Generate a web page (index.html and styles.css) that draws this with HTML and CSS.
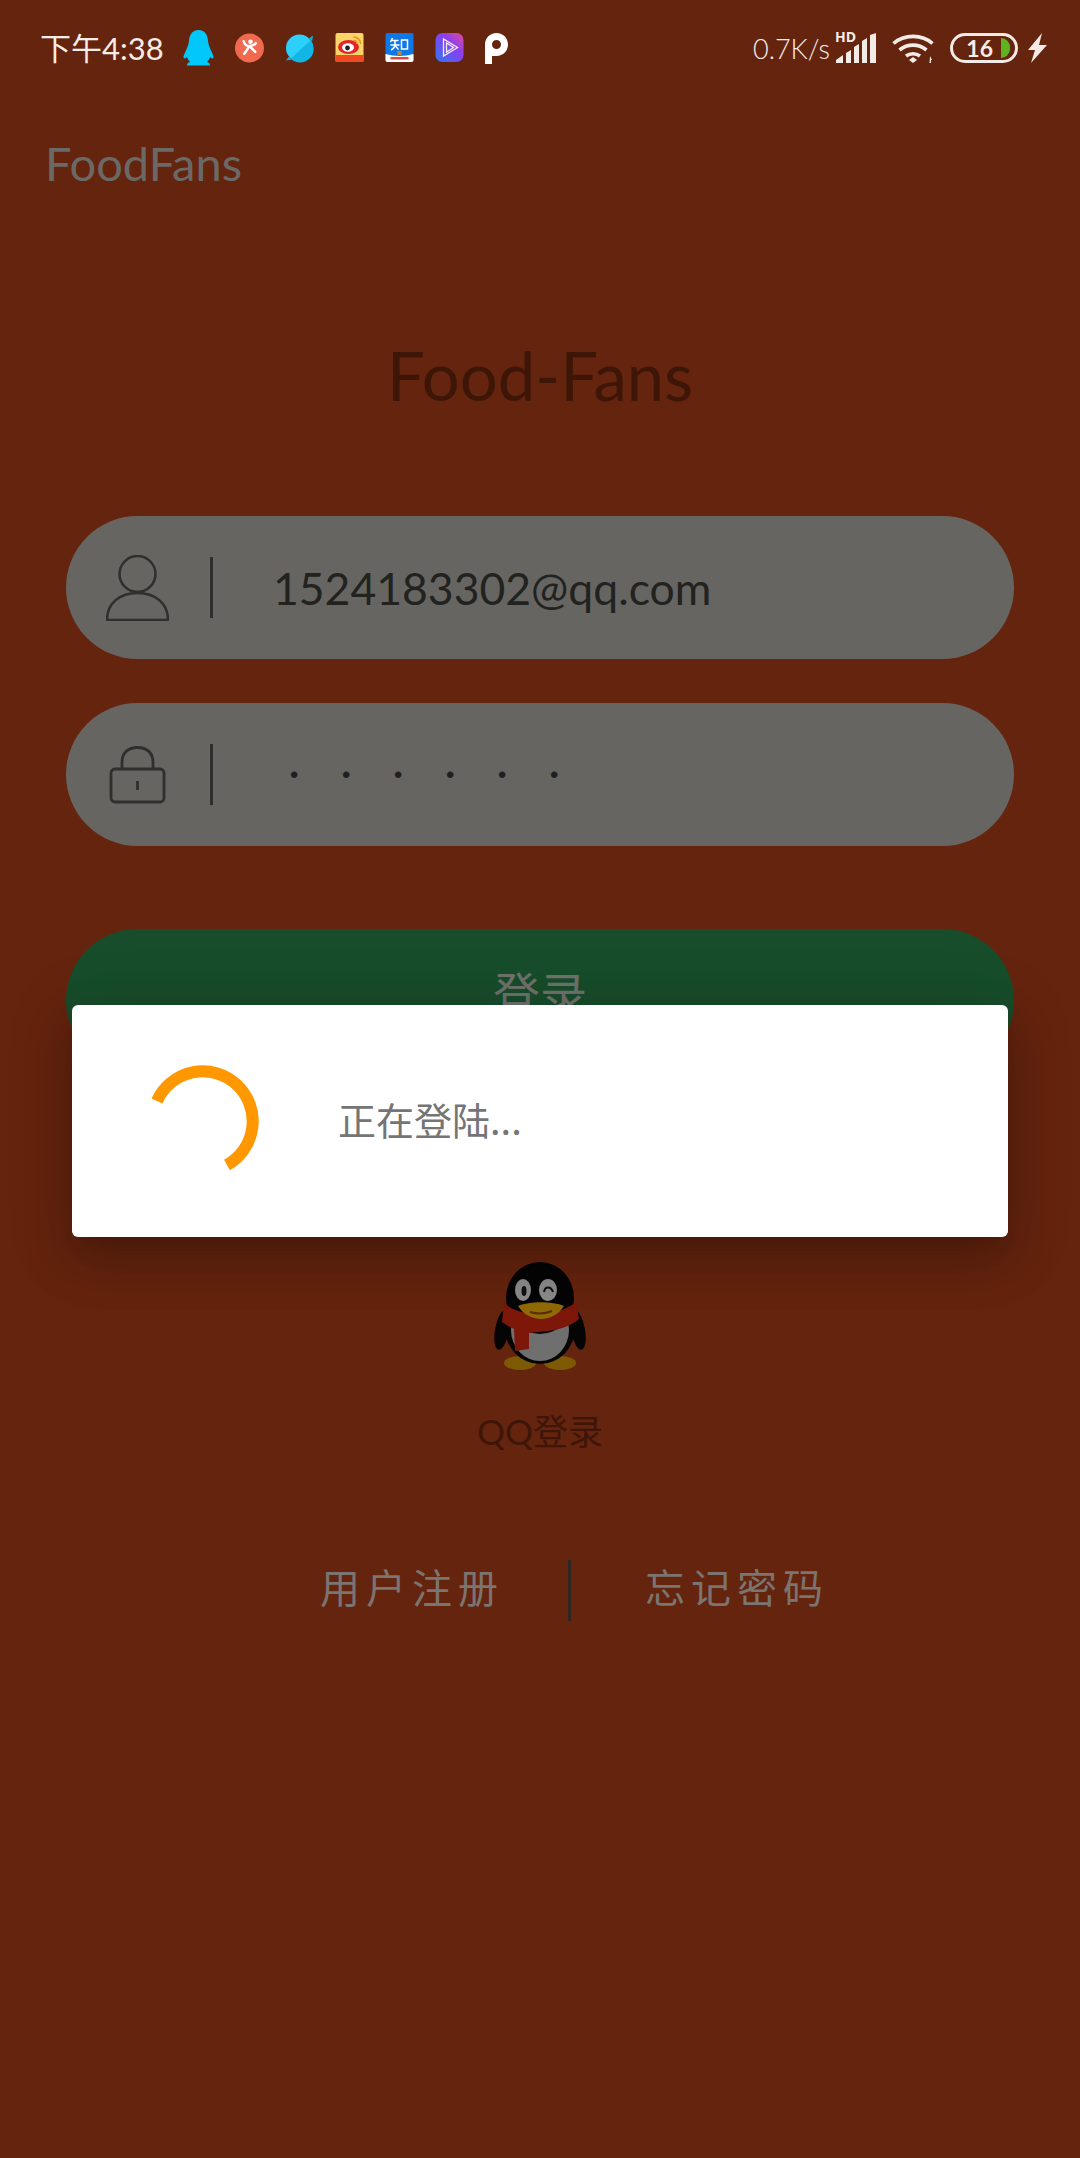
FILE: index.html
```html
<!DOCTYPE html>
<html lang="zh">
<head>
<meta charset="utf-8">
<title>FoodFans</title>
<link rel="stylesheet" href="styles.css">
</head>
<body>
<div class="page">
  <header class="status">
    <span class="time">下午4:38</span>
    <div class="notif">
      <svg class="n-qq" viewBox="0 0 31 36"><path fill="#00c8fa" d="M15.5 0C9 0 6.2 5.500 6 11 5.800 15 3 20 1 25c-1 2.500-.5 4 1 3.500l2-1.500c.5 2 1.500 3.500 3 5-2 .5-3 1.500-3 3.500h23c0-2-1-3-3-3.500 1.500-1.500 2.500-3 3-5l2 1.500c1.500.5 2-1 1-3.500-2-5-4.800-10-5-14C25 5.500 22 0 15.500 0z"/></svg>
      <svg class="n-sq" viewBox="0 0 30 30"><circle cx="15" cy="15" r="15" fill="#ef6a4f"/><circle cx="16" cy="8.500" r="2.400" fill="#fff"/><path fill="none" stroke="#fff" stroke-width="2.600" stroke-linecap="round" d="M9 8c1 4 3 5 6 5s5-1 6.500-3M14.500 13c-1 3-3 5-5 8M15 13c2 2 4 4 6 6"/></svg>
      <svg class="n-sq" viewBox="0 0 30 30"><circle cx="15" cy="15" r="14" fill="#2cd0fb"/><path fill="#12b6e4" d="M26.500 7A14 14 0 0 1 6 26z"/><path fill="#12b6e4" d="M25 5l4-3-1 6zM4 24l-3 4 6-1z"/></svg>
      <svg class="n-sq" viewBox="0 0 28 30"><rect width="28" height="29" rx="2" fill="#fbd568"/><rect y="22" width="28" height="7" fill="#ee4a22"/><ellipse cx="13" cy="14" rx="10.500" ry="7" fill="#e1252c"/><ellipse cx="12.500" cy="14.500" rx="6" ry="4.200" fill="#fff"/><circle cx="12" cy="15" r="2.400" fill="#222"/><path fill="none" stroke="#e98f1d" stroke-width="1.600" d="M18 4c4 0 7 3 7 7M18 7.500c2 0 3.500 1.500 3.500 3.500"/></svg>
      <svg class="n-sq" viewBox="0 0 28 30"><rect width="28" height="29" rx="2" fill="#0f78e6"/><path fill="#fff" d="M0 21q14 4 28 0v6a2 2 0 0 1-2 2H2a2 2 0 0 1-2-2z"/><path fill="none" stroke="#fff" stroke-width="1.500" d="M7 5l-2 4M6 7.500h7M9.500 8v3c0 3-2 5-4 6M5 12h9M10 13l3 3.500M16 7h6v9h-6z"/><rect x="12" y="18" width="4" height="4" fill="#b98a3c"/><rect x="5" y="24" width="18" height="2.400" fill="#e1453e"/></svg>
      <svg class="n-sq" viewBox="0 0 28 30"><defs><linearGradient id="vid" x1="0" y1="1" x2="1" y2="0"><stop offset="0" stop-color="#2f78f0"/><stop offset=".6" stop-color="#8a3ff0"/><stop offset="1" stop-color="#e24a9a"/></linearGradient></defs><rect width="28" height="29" rx="7" fill="url(#vid)"/><path fill="none" stroke="#f5e6f5" stroke-width="1.300" d="M8 6v17l14-8.500zM11 10v9l7-4.500z"/></svg>
      <svg class="n-p" viewBox="0 0 23 31"><path fill="#fff" fill-rule="evenodd" d="M0 31V11.500C0 5 5 0 11.500 0S23 5 23 11.500 18 23 11.500 23H7v8zM11.500 7a4.500 4.500 0 1 0 0 9 4.500 4.500 0 0 0 0-9z"/></svg>
    </div>
    <div class="sys">
      <span class="speed">0.7K/s</span>
      <div class="signal">
        <span class="hd">HD</span>
        <svg class="bars" viewBox="0 0 40 30"><path fill="#f5ebe6" d="M0 30v-3l7-5v8zM10 30V20l5-3v13zM18 30V14l5-3v19zM26 30V8l5-3v25zM34 30V2l6-2v30z"/></svg>
      </div>
      <svg class="wifi" viewBox="0 0 42 30"><g fill="none" stroke="#f5ebe6" stroke-width="3.600"><path d="M1.500 10.500C12 1 30 1 40.500 10.500"/><path d="M7.500 17c8-6.500 19-6.500 27 0"/><path d="M14 23c4-3 10-3 14 0"/></g><path fill="#f5ebe6" d="M21 24l4 3-4 3-4-3z"/><path fill="#f5ebe6" d="M38 23l2 4h-1v3h-1.500z"/></svg>
      <div class="battery"><span class="level">16</span><span class="charge"></span></div>
      <svg class="bolt" viewBox="0 0 19 30"><path fill="#f5ebe6" d="M14 0L0 17h7L3 30l16-18h-8z"/></svg>
    </div>
  </header>

  <div class="appbar">FoodFans</div>

  <main class="content">
    <h1 class="brand">Food-Fans</h1>

    <div class="field">
      <svg class="field-icon" viewBox="0 0 63 66"><g fill="none" stroke="#2f2f2d" stroke-width="2.500"><ellipse cx="31.500" cy="19" rx="18" ry="18"/><path d="M1 65c0-17 13-27 30.500-27S62 48 62 65z"/></g></svg>
      <span class="rule"></span>
      <span class="value">1524183302@qq.com</span>
    </div>

    <div class="field">
      <svg class="field-icon" viewBox="0 0 63 58"><g fill="none" stroke="#2f2f2d" stroke-width="2.800"><rect x="5" y="23" width="53" height="33" rx="4"/><path d="M16 23v-7C16 7 22 1.500 31.500 1.500S47 7 47 16v7"/><path d="M31.500 35v9"/></g></svg>
      <span class="rule"></span>
      <span class="dots">••••••</span>
    </div>

    <button class="login" type="button">登录</button>

    <div class="qq">
      <svg class="penguin" viewBox="0 0 92 108">
        <ellipse cx="26" cy="101" rx="16" ry="7" fill="#7e5a05"/>
        <ellipse cx="66" cy="101" rx="16" ry="7" fill="#7e5a05"/>
        <ellipse cx="8" cy="68" rx="7" ry="20" fill="#050505" transform="rotate(10 8 68)"/>
        <ellipse cx="84" cy="68" rx="7" ry="20" fill="#050505" transform="rotate(-10 84 68)"/>
        <ellipse cx="46" cy="66" rx="35" ry="36" fill="#050505"/>
        <ellipse cx="46" cy="68" rx="29" ry="31" fill="#6f6f6f"/>
        <ellipse cx="46" cy="36" rx="34" ry="36" fill="#050505"/>
        <path fill="#7d170a" d="M10 41c16 15 54 14 72-1l3 17c-8 7-20 11-31 12L35 71v16l-14 2-1-22c-4-2-8-4-12-7z"/>
        <ellipse cx="29" cy="28" rx="8" ry="11" fill="#8b8b8b"/>
        <ellipse cx="54" cy="28" rx="9" ry="11" fill="#8b8b8b"/>
        <ellipse cx="30" cy="29" rx="2.500" ry="5" fill="#111"/>
        <path fill="none" stroke="#111" stroke-width="2" d="M50 30c1-6 7-6 9 0"/>
        <path fill="#8f6a06" d="M24 44c12-5 34-5 46 0-5 8-14 13-23 13s-18-5-23-13z"/>
        <path fill="none" stroke="#5d2c05" stroke-width="2" d="M36 50c7 2 15 2 22-1"/>
      </svg>
      <span class="qq-label">QQ登录</span>
    </div>

    <nav class="links">
      <a class="link">用户注册</a>
      <span class="link-rule"></span>
      <a class="link">忘记密码</a>
    </nav>
  </main>

  <div class="dialog">
    <svg class="spinner" viewBox="0 0 112 112"><path fill="none" stroke="#ff9800" stroke-width="12" d="M79 100A50 50 0 1 0 9 36"/></svg>
    <span class="dialog-text">正在登陆...</span>
  </div>
</div>
</body>
</html>
```

FILE: styles.css
```css
* { box-sizing: border-box; }

html, body { margin: 0; padding: 0; }

body {
  background: #65240e;
  font-family: Lato, "Noto Sans CJK SC", sans-serif;
}

.page {
  position: relative;
  width: 1080px;
  height: 2158px;
  overflow: hidden;
}

/* status bar */
.status {
  display: flex;
  align-items: center;
  height: 96px;
  padding: 0 33px 0 40px;
  color: #f7ece7;
}

.time {
  width: 122px;
  font-size: 31px;
  line-height: 36px;
  white-space: nowrap;
}

.notif {
  display: flex;
  align-items: center;
  gap: 21px;
  margin-left: 21px;
}

.n-qq { width: 31px; height: 36px; }
.n-sq { width: 29px; height: 30px; }
.n-p { width: 23px; height: 31px; }

.sys {
  display: flex;
  align-items: center;
  margin-left: auto;
}

.speed {
  width: 79px;
  font-size: 27px;
  font-weight: 300;
  white-space: nowrap;
}

.signal {
  position: relative;
  width: 40px;
  height: 30px;
  margin-left: 4px;
}

.hd {
  position: absolute;
  left: -1px;
  top: -3px;
  font-family: "Open Sans", sans-serif;
  font-size: 14px;
  line-height: 14px;
  font-weight: 700;
}

.bars {
  display: block;
  width: 40px;
  height: 30px;
}

.wifi {
  width: 42px;
  height: 30px;
  margin-left: 16px;
}

.battery {
  display: flex;
  align-items: center;
  justify-content: flex-end;
  width: 68px;
  height: 30px;
  margin-left: 16px;
  padding-right: 5px;
  border: 3px solid #f5ebe6;
  border-radius: 15px;
}

.level {
  font-size: 23px;
  line-height: 24px;
  font-weight: 700;
  margin-right: 8px;
}

.charge {
  width: 9px;
  height: 20px;
  background: #5fb31d;
  border-radius: 0 10px 10px 0;
}

.bolt {
  width: 19px;
  height: 30px;
  margin-left: 10px;
}

/* app bar */
.appbar {
  display: flex;
  align-items: center;
  height: 142px;
  padding: 0 0 8px 45px;
  font-size: 47px;
  color: #6b6966;
  border-bottom: 1px solid #622410;
}

/* content */
.content {
  display: flex;
  flex-direction: column;
  align-items: center;
}

.brand {
  margin: 100px 0 0;
  font-size: 67px;
  line-height: 74px;
  font-weight: 400;
  color: #3e1608;
}

.field {
  display: flex;
  align-items: center;
  width: 948px;
  height: 143px;
  margin-top: 44px;
  padding-left: 40px;
  background: #666562;
  border-radius: 72px;
}

.brand + .field { margin-top: 104px; }

.field-icon {
  width: 63px;
  flex: none;
}

.rule {
  flex: none;
  width: 3px;
  height: 61px;
  margin-left: 41px;
  background: #2f2f2d;
}

.value {
  margin-left: 60px;
  font-size: 44.500px;
  color: #22221f;
  white-space: nowrap;
}

.dots {
  margin-left: 77px;
  font-family: "Liberation Sans", sans-serif;
  font-size: 24px;
  letter-spacing: 43.600px;
  color: #1f1f1d;
}

.login {
  display: block;
  width: 948px;
  height: 143px;
  margin-top: 83px;
  padding: 0 0 18px;
  border: 0;
  border-radius: 72px;
  background: #174d2b;
  color: #6f716c;
  font-family: "Noto Sans CJK SC", sans-serif;
  font-size: 47px;
}

.qq {
  display: flex;
  flex-direction: column;
  align-items: center;
  margin-top: 190px;
}

.penguin {
  display: block;
  width: 92px;
  height: 108px;
}

.qq-label {
  margin-top: 36px;
  font-size: 35px;
  line-height: 50px;
  color: #3e1508;
  font-family: Lato, "Noto Sans CJK SC", sans-serif;
}

.links {
  display: flex;
  align-items: center;
  align-self: stretch;
  height: 62px;
  margin-top: 103px;
  padding-left: 320px;
}

.link {
  padding-bottom: 8px;
  font-family: "Noto Sans CJK SC", sans-serif;
  font-size: 40px;
  letter-spacing: 6px;
  color: #7b7470;
  white-space: nowrap;
}

.link-rule {
  width: 3px;
  height: 61px;
  margin: 0 74px 0 64px;
  background: #2d2622;
}

/* loading dialog, over the form */
.dialog {
  position: absolute;
  left: 72px;
  top: 1005px;
  display: flex;
  align-items: center;
  width: 936px;
  height: 232px;
  padding-left: 76px;
  background: #fff;
  border-radius: 6px;
  box-shadow: 0 24px 48px 6px rgba(0,0,0,.14), 0 9px 60px 12px rgba(0,0,0,.1), 0 11px 15px -7px rgba(0,0,0,.12);
}

.spinner {
  width: 112px;
  height: 112px;
  flex: none;
}

.dialog-text {
  margin-left: 78px;
  padding-bottom: 6px;
  font-family: "Noto Sans CJK SC", sans-serif;
  font-size: 38px;
  color: #757575;
  white-space: nowrap;
}
```
